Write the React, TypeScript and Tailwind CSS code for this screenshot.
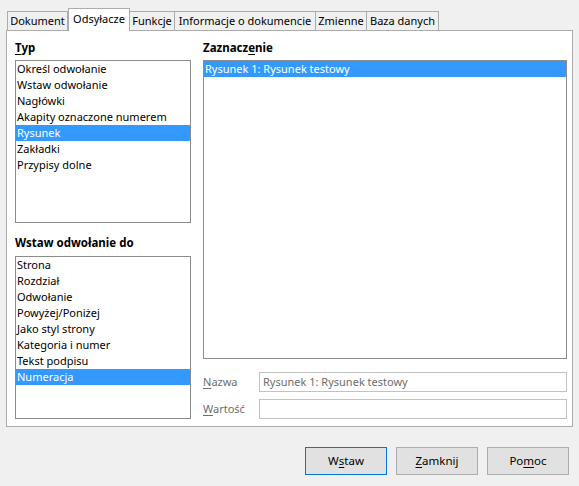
import type { ReactNode } from "react";

const tabs = [
  { label: "Dokument", w: "w-[61px]" },
  { label: "Odsyłacze", w: "w-[62px]", active: true },
  { label: "Funkcje", w: "w-[46px]" },
  { label: "Informacje o dokumencie", w: "w-[142px]" },
  { label: "Zmienne", w: "w-[52px]" },
  { label: "Baza danych", w: "w-[73px]" },
];

const typItems = [
  "Określ odwołanie",
  "Wstaw odwołanie",
  "Nagłówki",
  "Akapity oznaczone numerem",
  "Rysunek",
  "Zakładki",
  "Przypisy dolne",
];

const insertItems = [
  "Strona",
  "Rozdział",
  "Odwołanie",
  "Powyżej/Poniżej",
  "Jako styl strony",
  "Kategoria i numer",
  "Tekst podpisu",
  "Numeracja",
];

function ListBox({
  items,
  selected,
  className,
}: {
  items: string[];
  selected: string;
  className: string;
}) {
  return (
    <div className={`border border-[#8c8c8c] bg-white ${className}`}>
      {items.map((item) => (
        <div
          key={item}
          className={`h-[16px] leading-[16px] pl-[1px] whitespace-nowrap ${
            item === selected ? "bg-[#3399ff] text-white" : "text-black"
          }`}
        >
          {item}
        </div>
      ))}
    </div>
  );
}

function Button({ children, focused }: { children: ReactNode; focused?: boolean }) {
  return (
    <div
      className={`w-[82px] h-[28px] flex items-center justify-center bg-[#e1e1e1] text-[11.5px] border ${
        focused ? "border-[#0078d7]" : "border-[#adadad]"
      }`}
    >
      {children}
    </div>
  );
}

export default function App() {
  return (
    <div
      className="w-[579px] h-[486px] bg-[#f0f0f0] text-[11px] text-black overflow-hidden"
      style={{ fontFamily: '"Noto Sans", "Liberation Sans", sans-serif' }}
    >
      {/* Tab strip */}
      <div className="flex items-end h-[30px] pl-[7px]">
        {tabs.map((t) =>
          t.active ? (
            <div
              key={t.label}
              className={`${t.w} h-[23px] -mb-[1px] relative z-10 bg-white border border-b-0 border-[#acacac] flex items-center justify-center pb-[2px] whitespace-nowrap`}
            >
              {t.label}
            </div>
          ) : (
            <div
              key={t.label}
              className={`${t.w} h-[19px] bg-[#f0f0f0] border border-b-0 border-[#acacac] -ml-[1px] first:ml-0 flex items-center justify-center whitespace-nowrap`}
            >
              {t.label}
            </div>
          )
        )}
      </div>

      {/* Tab panel */}
      <div className="mx-[6px] h-[397px] bg-white border border-[#acacac] pl-[8px] pt-[9px] flex gap-[12px]">
        {/* Left column */}
        <div className="w-[176px] flex flex-col">
          <div className="h-[16px] leading-[16px] font-bold text-[11.5px] mb-[4px]">
            <span className="underline underline-offset-2">T</span>yp
          </div>
          <ListBox items={typItems} selected="Rysunek" className="h-[163px]" />
          <div className="h-[16px] leading-[16px] font-bold text-[11.5px] mt-[12px] mb-[5px]">
            Wstaw odwołanie do
          </div>
          <ListBox items={insertItems} selected="Numeracja" className="h-[163px]" />
        </div>

        {/* Right column */}
        <div className="w-[364px] flex flex-col">
          <div className="h-[16px] leading-[16px] font-bold text-[11.5px] mb-[4px]">
            Zaznacz<span className="underline underline-offset-2">e</span>nie
          </div>
          <ListBox
            items={["Rysunek 1: Rysunek testowy"]}
            selected="Rysunek 1: Rysunek testowy"
            className="h-[299px]"
          />
          <div className="flex items-center mt-[13px] h-[20px]">
            <div className="w-[56px] text-[#6d6d6d]">
              <span className="underline underline-offset-2">N</span>azwa
            </div>
            <div className="flex-1 h-[20px] border border-[#c2c2c2] bg-white pl-[3px] leading-[18px] text-[#6d6d6d]">
              Rysunek 1: Rysunek testowy
            </div>
          </div>
          <div className="flex items-center mt-[7px] h-[20px]">
            <div className="w-[56px] text-[#6d6d6d]">
              <span className="underline underline-offset-2">W</span>artość
            </div>
            <div className="flex-1 h-[20px] border border-[#c2c2c2] bg-white" />
          </div>
        </div>
      </div>

      {/* Buttons */}
      <div className="flex justify-end gap-[9px] pr-[10px] mt-[20px]">
        <Button focused>
          W<span className="underline underline-offset-2">s</span>taw
        </Button>
        <Button>
          <span className="underline underline-offset-2">Z</span>amknij
        </Button>
        <Button>
          Po<span className="underline underline-offset-2">m</span>oc
        </Button>
      </div>
    </div>
  );
}
